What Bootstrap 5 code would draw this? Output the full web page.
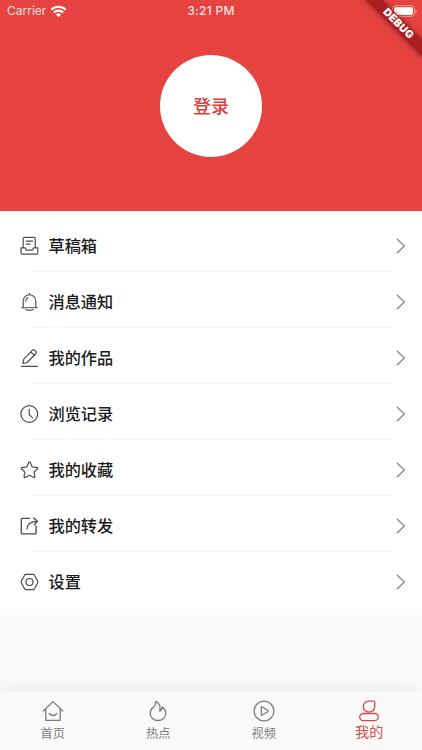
<!DOCTYPE html>
<html lang="zh-CN">
<head>
<meta charset="utf-8">
<meta name="viewport" content="width=device-width, initial-scale=1">
<title>我的</title>
<link href="https://cdn.jsdelivr.net/npm/bootstrap@5.3.0/dist/css/bootstrap.min.css" rel="stylesheet">
<style>
body{font-family:"Inter","Noto Sans CJK SC",sans-serif;background:#fafafa;color:#1c1c1c}
svg{display:block;fill:none;stroke:currentColor;stroke-linecap:round;stroke-linejoin:round;flex:none}
.hero{height:211px;background:#e64240}
.status-bar{height:22px;font-size:12px;line-height:22px;color:#fbe2e1}
.side{width:150px;padding-left:7px}
.clock{font-weight:500;letter-spacing:.3px}
.login{width:102px;height:102px;margin-top:33px;color:#d93f3d;font-size:18px;font-weight:500}
.ribbon{width:82px;height:12.2px;right:-16.5px;top:18.4px;transform:rotate(45deg);background:#ab1f20;box-shadow:0 0 6px rgba(0,0,0,.4);color:#fff;font-size:10.6px;line-height:12.2px;font-weight:900;letter-spacing:.3px}
.menu{padding-top:6px}
.menu-row{height:56px;padding:1px 16px 0 20px;background:#fff;font-size:16.2px;font-weight:500}
.menu-row + .menu-row::before{content:"";position:absolute;left:32px;right:30px;top:-2px;height:1px;background:#f8f8f8}
.menu-row svg{color:#4c4c4c}
.menu-row span{margin-left:9.5px;line-height:24px}
.menu-row .arrow{color:#858585}
.tabs{height:58px;background:#fafafa;box-shadow:0 -2px 18px rgba(0,0,0,.07);color:#7c7c7c;font-size:12.2px}
.tabs > div{padding-top:8px}
.tabs span{line-height:18px;margin-top:2.5px}
.tabs .on{color:#e04746}
.tabs .on span{font-size:14.2px;margin-top:1px}
</style>
<script src="https://cdn.jsdelivr.net/npm/bootstrap@5.3.0/dist/js/bootstrap.bundle.min.js"></script>
</head>
<body>
<div class="d-flex flex-column vh-100 overflow-hidden position-relative">
  <header class="hero d-flex flex-column align-items-center">
    <div class="status-bar d-flex justify-content-between w-100">
      <div class="side d-flex align-items-center"><span>Carrier</span>
        <svg class="ms-1" width="17" height="13" viewBox="0 0 17 13" stroke="none"><path fill="#fff" stroke="none" d="M8.5 12.2 6 9.5a3.6 3.6 0 0 1 5 0z"/><path stroke="#fff" stroke-width="2.1" stroke-linecap="butt" d="M1.3 4.7a10.4 10.4 0 0 1 14.4 0M3.8 7.5a6.8 6.8 0 0 1 9.4 0"/></svg>
      </div>
      <div class="clock">3:21 PM</div>
      <div class="side d-flex justify-content-end align-items-center pe-1">
        <svg width="27" height="13" viewBox="0 0 27 13"><rect x="1.5" y=".8" width="22" height="10.6" rx="3" stroke="#f09a99"/><rect x="3" y="2.3" width="19" height="7.6" rx="1.8" fill="#fff" stroke="none"/><path d="M25 4.8v2.6" stroke="#f09a99"/></svg>
      </div>
    </div>
    <div class="login rounded-circle bg-white d-flex align-items-center justify-content-center">登录</div>
  </header>
  <div class="ribbon position-absolute text-center">DEBUG</div>

  <main class="menu">
    <div class="menu-row position-relative d-flex align-items-center">
      <svg width="19" height="20" viewBox="0 0 19 20" stroke-width="1.2"><path d="M3.2 11.2V2.6Q3.2 1.3 4.5 1.3h9.4q1.3 0 1.3 1.3v8.6M6.3 5.2h6.2M6.3 8.2H10M1 11.8h4.2l1.1 2.4h6.2l1.1-2.4h4.2v5.2q0 1.2-1.2 1.2H2.2Q1 18.200 1 17z"/></svg>
      <span>草稿箱</span><svg class="arrow ms-auto" width="10" height="16" viewBox="0 0 10 16" stroke-width="1.3"><path d="m1.3 1.3 7 6.7-7 6.7"/></svg>
    </div>
    <div class="menu-row position-relative d-flex align-items-center">
      <svg width="19" height="20" viewBox="0 0 19 20" stroke-width="1.15"><path d="M9.500 1.200v1.500M1.600 15.700h15.800M3.200 15.500V9a6.300 6.300 0 0 1 12.600 0v6.500M5.600 9.200q.2-2.500 2.300-3.500M5.800 17.500q3.700 1.800 7.400 0"/></svg>
      <span>消息通知</span><svg class="arrow ms-auto" width="10" height="16" viewBox="0 0 10 16" stroke-width="1.3"><path d="m1.3 1.3 7 6.7-7 6.7"/></svg>
    </div>
    <div class="menu-row position-relative d-flex align-items-center">
      <svg width="19" height="20" viewBox="0 0 19 20" stroke-width="1.2"><path d="M1.5 18.300h15.800M2.900 15.500l.7-4.200 8.900-9.200q1-.9 2 0l1.500 1.400q.9 1 0 2l-8.900 9zM10.800 3.900l3.500 3.400"/></svg>
      <span>我的作品</span><svg class="arrow ms-auto" width="10" height="16" viewBox="0 0 10 16" stroke-width="1.3"><path d="m1.3 1.3 7 6.7-7 6.7"/></svg>
    </div>
    <div class="menu-row position-relative d-flex align-items-center">
      <svg width="19" height="20" viewBox="0 0 19 20" stroke-width="1.2"><circle cx="9.3" cy="10" r="8.4"/><path d="M9.2 5v5.600l3.300 3"/></svg>
      <span>浏览记录</span><svg class="arrow ms-auto" width="10" height="16" viewBox="0 0 10 16" stroke-width="1.3"><path d="m1.3 1.3 7 6.7-7 6.7"/></svg>
    </div>
    <div class="menu-row position-relative d-flex align-items-center">
      <svg width="19" height="20" viewBox="0 0 19 20" stroke-width="1.2"><path d="M8.8 2.4q.7-1.1 1.400 0l2 4.500 4.900.7q1.100.3.4 1.200l-3.400 3.300.8 4.600q0 1.200-1.100.8l-4.300-2.200-4.300 2.200q-1.100.4-1.100-.8l.8-4.600-3.400-3.300q-.7-.9.4-1.200l4.900-.7z"/></svg>
      <span>我的收藏</span><svg class="arrow ms-auto" width="10" height="16" viewBox="0 0 10 16" stroke-width="1.3"><path d="m1.3 1.3 7 6.7-7 6.7"/></svg>
    </div>
    <div class="menu-row position-relative d-flex align-items-center">
      <svg width="19" height="20" viewBox="0 0 19 20" stroke-width="1.3"><path d="M9.800 2.300H2.200q-.9 0-.9.9v13.800q0 .9.900.9h13q.9 0 .9-.9V9.800M7 12.800c.2-4.200 2.900-7.400 10.400-7.500M13.600 1.900l3.900 3.400-3.300 3.500"/></svg>
      <span>我的转发</span><svg class="arrow ms-auto" width="10" height="16" viewBox="0 0 10 16" stroke-width="1.3"><path d="m1.3 1.3 7 6.7-7 6.7"/></svg>
    </div>
    <div class="menu-row position-relative d-flex align-items-center">
      <svg width="19" height="20" viewBox="0 0 19 20" stroke-width="1.2"><path d="M5.700 2.300h7.600q.6 0 .9.5l3.500 6.500q.3.7 0 1.400l-3.500 6.500q-.3.500-.9.500H5.700q-.6 0-.9-.5l-3.500-6.500q-.3-.7 0-1.400l3.500-6.500q.3-.5.9-.5z"/><circle cx="9.500" cy="10" r="3.500"/></svg>
      <span>设置</span><svg class="arrow ms-auto" width="10" height="16" viewBox="0 0 10 16" stroke-width="1.3"><path d="m1.3 1.3 7 6.7-7 6.7"/></svg>
    </div>
  </main>

  <nav class="tabs d-flex mt-auto">
    <div class="col-3 d-flex flex-column align-items-center">
      <svg width="22" height="22" viewBox="0 0 22 22" stroke-width="1.3"><path d="M1.2 11 11 1.6l9.8 9.4M3.8 9v11.3h14.4V9M7.200 13.500q3.800 4 7.600 0"/></svg><span>首页</span>
    </div>
    <div class="col-3 d-flex flex-column align-items-center">
      <svg width="22" height="22" viewBox="0 0 22 22" stroke-width="1.3"><path d="M8.800 1.400c3.400 1.700 5 4.800 4 9.800 1.700-1 2.400-2.500 2.400-4.400 2.400 2 3.600 4.200 3.600 6.400 0 4.200-3.400 7.300-7.800 7.300s-7.800-3-7.800-7.300c0-3.500 1.800-5 3.200-6 1.700-1.400 2.400-3.300 2.400-5.800z"/></svg><span>热点</span>
    </div>
    <div class="col-3 d-flex flex-column align-items-center">
      <svg width="22" height="22" viewBox="0 0 22 22" stroke-width="1.3"><circle cx="11" cy="11" r="9.900"/><path d="M8.300 7.600q0-1.200 1-.6l5.400 3.300q.9.700 0 1.400L9.300 15q-1 .6-1-.6z"/></svg><span>视频</span>
    </div>
    <div class="on col-3 d-flex flex-column align-items-center">
      <svg width="22" height="22" viewBox="0 0 22 22" stroke-width="1.3"><path d="M11 1.200h4.600q1.100 0 1.100 1.100v4.400A5.700 5.500 0 1 1 11 1.200z"/><rect x="1.700" y="13.500" width="18.600" height="7.200" rx="3.600"/></svg><span>我的</span>
    </div>
  </nav>
</div>
</body>
</html>
